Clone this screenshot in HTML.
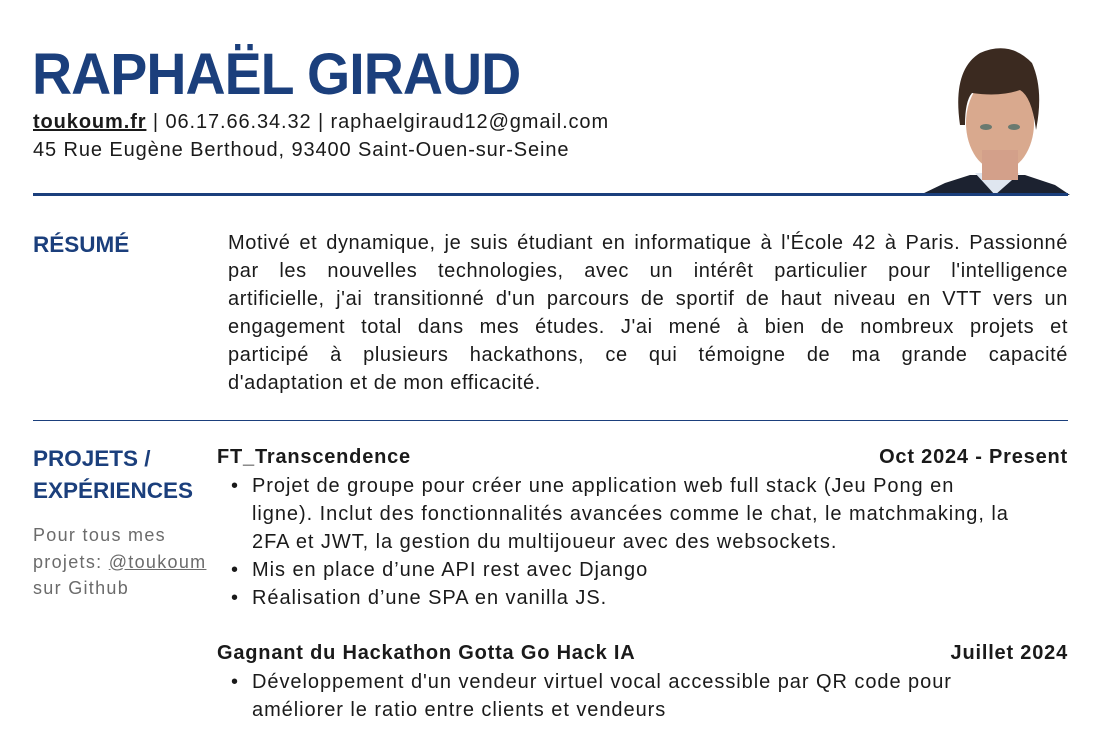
<!DOCTYPE html>
<html><head><meta charset="utf-8"><style>
*{margin:0;padding:0;box-sizing:border-box}
body{width:1102px;height:730px;overflow:hidden;background:#fff;font-family:"Liberation Sans",sans-serif;color:#1a1a1a;position:relative}
.a{position:absolute;white-space:nowrap}
h1{position:absolute;left:32px;top:41px;font-size:58px;font-weight:bold;color:#1b3f7c;letter-spacing:-1px;white-space:nowrap;transform:scaleX(0.957);transform-origin:left}
.t{font-size:20px;line-height:28px;letter-spacing:0.9px}
.rule{position:absolute;left:33px;width:1035px;background:#1b3f7c}
.sec{position:absolute;left:33px;font-size:22.5px;font-weight:bold;color:#1b3f7c;line-height:32px}
.sum{position:absolute;left:228px;top:229px;width:840px;font-size:20px;line-height:28px;letter-spacing:0.6px}
.sum div{text-align:justify;text-align-last:justify;white-space:nowrap}
.sum div.l{text-align-last:left}
.bt{font-weight:bold;letter-spacing:0.8px}
.li{position:absolute;left:252px;font-size:20px;line-height:28px;letter-spacing:0.95px;white-space:nowrap}
.li:before{content:"•";position:absolute;left:-21px}
</style></head><body>
<h1>RAPHAËL GIRAUD</h1>
<div class="a t" style="left:33px;top:108px"><b style="text-decoration:underline">toukoum.fr</b> | 06.17.66.34.32 | raphaelgiraud12@gmail.com</div>
<div class="a t" style="left:33px;top:136px">45 Rue Eugène Berthoud, 93400 Saint-Ouen-sur-Seine</div>
<svg class="a" style="left:920px;top:35px" width="150" height="160" viewBox="0 0 150 160">
<rect width="150" height="160" fill="#fff"/>
<path d="M0 160 L25 148 L50 140 L105 140 L135 150 L150 160Z" fill="#1c2230"/>
<path d="M55 138 L75 160 L100 138 Z" fill="#dfe6f0"/>
<ellipse cx="80" cy="88" rx="34" ry="48" fill="#d9a98e"/>
<rect x="62" y="115" width="36" height="30" fill="#d3a08a"/>
<path d="M40 90 Q32 35 60 18 Q90 5 112 28 Q124 55 116 95 Q112 62 100 55 Q80 62 52 58 Q45 66 45 90Z" fill="#3b2a20"/>
<ellipse cx="66" cy="92" rx="6" ry="3" fill="#6a7a70"/><ellipse cx="94" cy="92" rx="6" ry="3" fill="#6a7a70"/>
</svg>
<div class="rule" style="top:193px;height:3px"></div>
<div class="sec" style="top:229px">RÉSUMÉ</div>
<div class="sum">
<div>Motivé et dynamique, je suis étudiant en informatique à l'École 42 à Paris. Passionné</div>
<div>par les nouvelles technologies, avec un intérêt particulier pour l'intelligence</div>
<div>artificielle, j'ai transitionné d'un parcours de sportif de haut niveau en VTT vers un</div>
<div>engagement total dans mes études. J'ai mené à bien de nombreux projets et</div>
<div>participé à plusieurs hackathons, ce qui témoigne de ma grande capacité</div>
<div class="l">d'adaptation et de mon efficacité.</div>
</div>
<div class="rule" style="top:420px;height:1px"></div>
<div class="sec" style="top:443px">PROJETS /<br>EXPÉRIENCES</div>
<div class="a" style="left:33px;top:522px;font-size:18px;line-height:26.5px;letter-spacing:1.3px;color:#6b6b6b">Pour tous mes<br>projets: <u>@toukoum</u><br>sur Github</div>
<div class="a t bt" style="left:217px;top:443px">FT_Transcendence</div>
<div class="a t bt" style="right:34px;top:443px">Oct 2024 - Present</div>
<div class="li" style="top:472px">Projet de groupe pour créer une application web full stack (Jeu Pong en<br>ligne). Inclut des fonctionnalités avancées comme le chat, le matchmaking, la<br>2FA et JWT, la gestion du multijoueur avec des websockets.</div>
<div class="li" style="top:556px">Mis en place d’une API rest avec Django</div>
<div class="li" style="top:584px">Réalisation d’une SPA en vanilla JS.</div>
<div class="a t bt" style="left:217px;top:639px">Gagnant du Hackathon Gotta Go Hack IA</div>
<div class="a t bt" style="right:34px;top:639px">Juillet 2024</div>
<div class="li" style="top:668px">Développement d'un vendeur virtuel vocal accessible par QR code pour<br>améliorer le ratio entre clients et vendeurs</div>
</body></html>
